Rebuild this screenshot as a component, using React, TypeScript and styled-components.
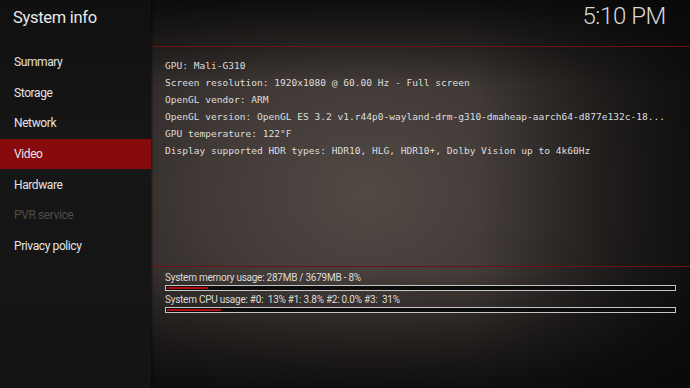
import { FC } from 'react';
import styled, { createGlobalStyle } from 'styled-components';

const GlobalStyle = createGlobalStyle`
  html, body {
    margin: 0;
    padding: 0;
    width: 690px;
    height: 388px;
    overflow: hidden;
    background: #111;
  }
`;

const menu = [
  { label: 'Summary' },
  { label: 'Storage' },
  { label: 'Network' },
  { label: 'Video', active: true },
  { label: 'Hardware' },
  { label: 'PVR service', disabled: true },
  { label: 'Privacy policy' },
];

const infoLines = [
  'GPU: Mali-G310',
  'Screen resolution: 1920x1080 @ 60.00 Hz - Full screen',
  'OpenGL vendor: ARM',
  'OpenGL version: OpenGL ES 3.2 v1.r44p0-wayland-drm-g310-dmaheap-aarch64-d877e132c-18...',
  'GPU temperature: 122°F',
  'Display supported HDR types: HDR10, HLG, HDR10+, Dolby Vision up to 4k60Hz',
];

const stats = [
  { label: 'System memory usage: 287MB / 3679MB - 8%', value: 8 },
  { label: 'System CPU usage: #0:  13% #1: 3.8% #2: 0.0% #3:  31%', value: 10.6 },
];

const Screen = styled.div`
  display: flex;
  width: 690px;
  height: 388px;
  font-family: Roboto, 'Noto Sans', sans-serif;
`;

const Sidebar = styled.aside`
  display: flex;
  flex-direction: column;
  width: 151px;
  background: linear-gradient(180deg, #101010 0%, #161616 40%, #141414 100%);
  box-shadow: 1px 0 2px rgba(0, 0, 0, 0.6);
  z-index: 1;
`;

const Title = styled.h1`
  margin: 0;
  height: 47px;
  padding: 8px 0 0 13px;
  box-sizing: border-box;
  font-size: 16.5px;
  font-weight: 400;
  letter-spacing: -0.3px;
  color: #e8e8e8;
`;

const MenuList = styled.ul`
  list-style: none;
  margin: 0;
  padding: 0;
`;

const MenuItem = styled.li<{ $active?: boolean; $disabled?: boolean }>`
  display: flex;
  align-items: center;
  height: 30.6px;
  padding-left: 14px;
  font-size: 12px;
  letter-spacing: -0.4px;
  color: ${(p) => (p.$disabled ? '#4c4c4c' : '#e4e4e4')};
  background: ${(p) => (p.$active ? '#870a0c' : 'transparent')};
`;

const Main = styled.main`
  flex: 1;
  display: flex;
  flex-direction: column;
  background:
    linear-gradient(180deg, rgba(8, 8, 8, 0.85) 0%, rgba(8, 8, 8, 0) 22%, rgba(8, 8, 8, 0) 70%, rgba(8, 8, 8, 0.8) 100%),
    linear-gradient(90deg, rgba(10, 10, 10, 0) 60%, rgba(10, 10, 10, 0.75) 100%),
    radial-gradient(ellipse 70% 75% at 40% 50%, #514944 0%, #403936 45%, #2a2624 80%, #1c1a19 100%);
`;

const Header = styled.header`
  display: flex;
  justify-content: flex-end;
  height: 47px;
  box-sizing: border-box;
  padding: 2px 24px 0 0;
  border-bottom: 1px solid #6e1014;
`;

const Clock = styled.div`
  font-weight: 300;
  font-size: 24px;
  letter-spacing: -0.4px;
  color: #d8d8d8;
`;

const Info = styled.div`
  flex: 1;
  padding: 11px 0 0 14px;
  font-family: 'DejaVu Sans Mono', 'Liberation Mono', monospace;
  font-size: 9.55px;
  line-height: 16.9px;
  color: #dedede;
  white-space: pre;
`;

const Footer = styled.footer`
  height: 122px;
  box-sizing: border-box;
  padding: 3px 14px 0 14px;
  border-top: 1px solid #6e1014;
`;

const StatLabel = styled.div`
  font-size: 10px;
  letter-spacing: -0.25px;
  line-height: 15px;
  color: #dcdcdc;
  white-space: pre;
`;

const Bar = styled.div`
  height: 6px;
  box-sizing: border-box;
  border: 1px solid #c4c4c4;
  background: #0c0c0c;
  padding: 1px;
  margin-bottom: 1px;
`;

const Fill = styled.div`
  height: 2px;
  background: #b00d12;
`;

const App: FC = () => (
  <>
    <GlobalStyle />
    <Screen>
      <Sidebar>
        <Title>System info</Title>
        <MenuList>
          {menu.map((m) => (
            <MenuItem key={m.label} $active={m.active} $disabled={m.disabled}>
              {m.label}
            </MenuItem>
          ))}
        </MenuList>
      </Sidebar>
      <Main>
        <Header>
          <Clock>5:10 PM</Clock>
        </Header>
        <Info>
          {infoLines.map((line) => (
            <div key={line}>{line}</div>
          ))}
        </Info>
        <Footer>
          {stats.map((s) => (
            <div key={s.label}>
              <StatLabel>{s.label}</StatLabel>
              <Bar>
                <Fill style={{ width: `${s.value}%` }} />
              </Bar>
            </div>
          ))}
        </Footer>
      </Main>
    </Screen>
  </>
);

export default App;
